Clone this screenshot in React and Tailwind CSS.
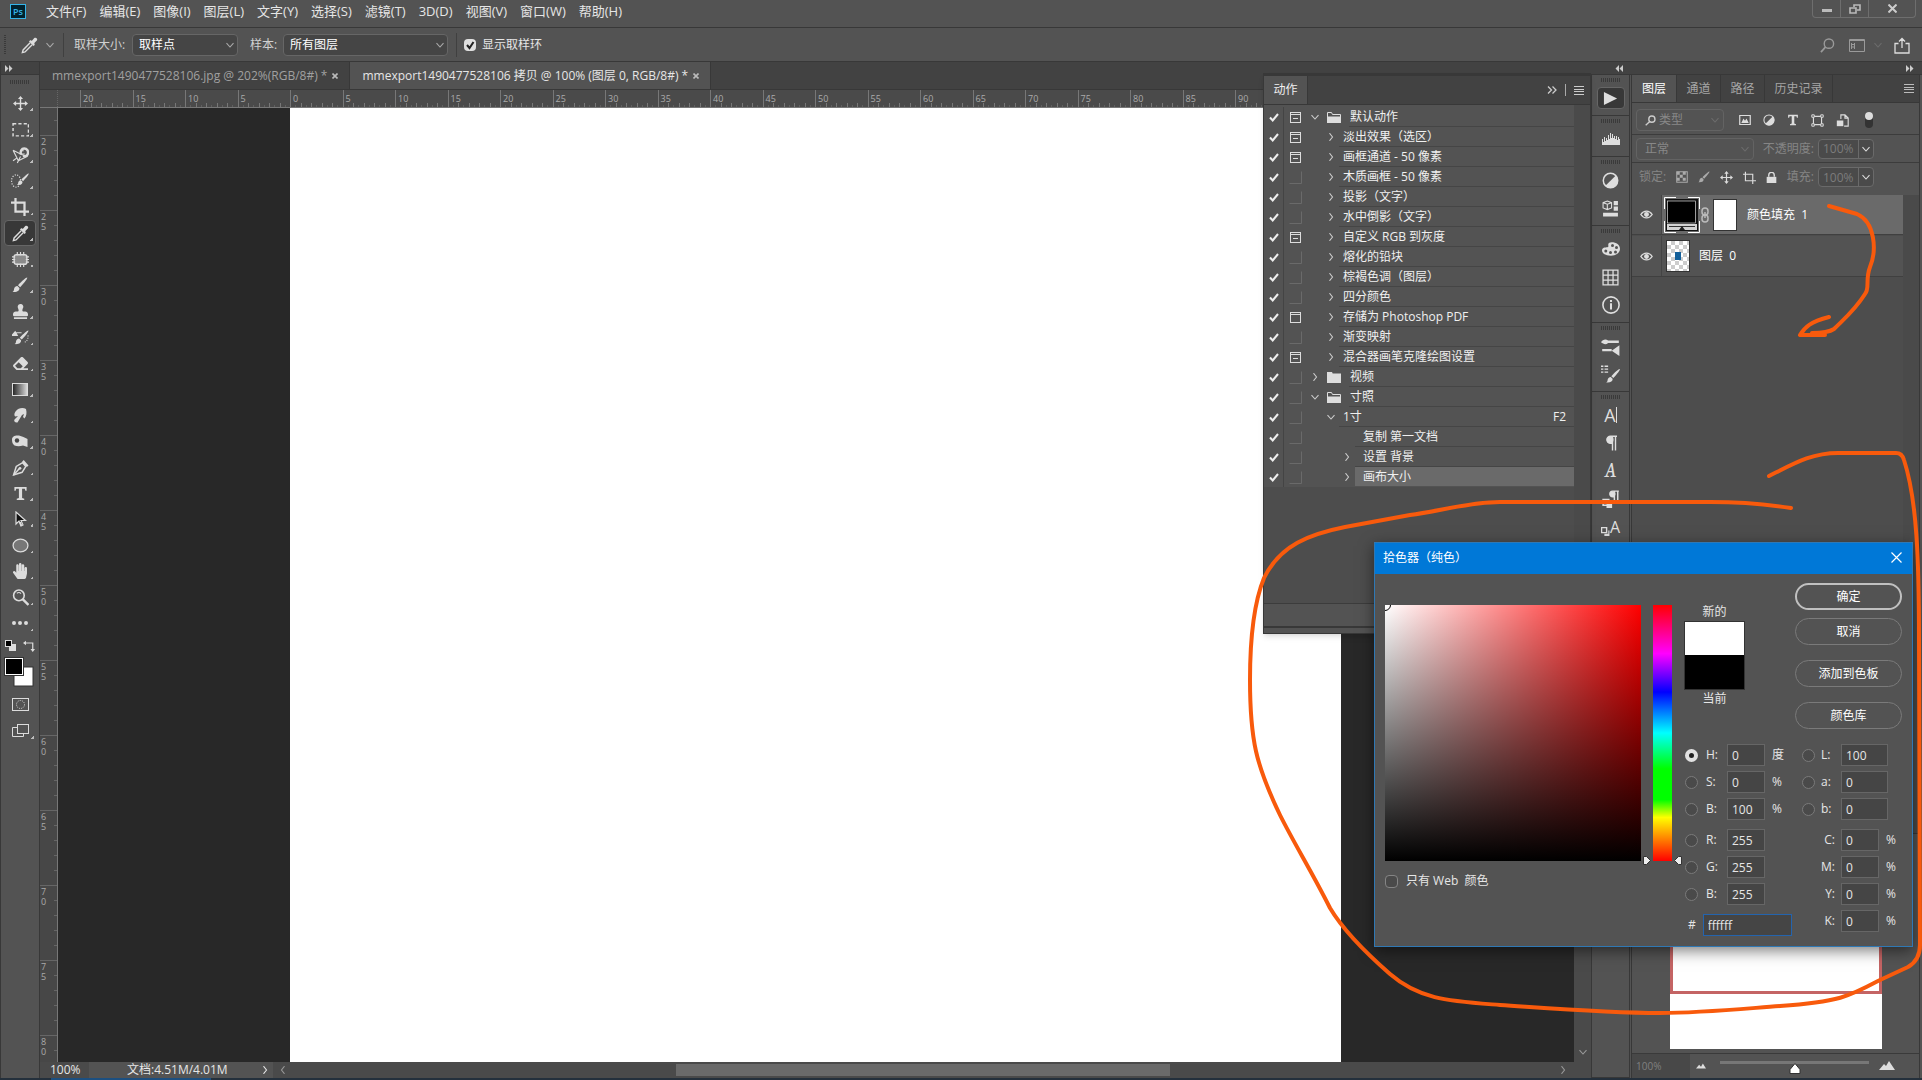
import React from "react";
import { FaStamp, FaEraser, FaHandPaper } from "react-icons/fa";

const Svg = ({ size = 16, children, className = "" }) => (
  <svg width={size} height={size} viewBox="0 0 16 16" fill="none" stroke="currentColor" strokeWidth="1.4" className={"shrink-0 " + className} aria-hidden="true">
    {children}
  </svg>
);

const Solid = ({ d, size = 16 }) => (
  <Svg size={size}><path d={d} fill="currentColor" stroke="none" /></Svg>
);

const BRUSH = "M15.2.6c.6.5-2 4.600-7 9.600L6 8.200C10.500 3.600 14.600 0 15.200.6zM5.400 9l2 2c.3 2.400-1.700 4.400-6.900 4 1.600-1 1.300-1.900 1.600-3.300C2.600 9.900 4 8.900 5.400 9z";

const Eyedropper = ({ size = 17 }) => (
  <Svg size={size}>
    <path d="M9.500 3.500l1-.3L12.500 1c1.500-1.300 3.600.8 2.400 2.300L12.800 5.400l-.3 1.200.6.6-1.300 1.300-4.300-4.300L8.800 2.900z" fill="currentColor" stroke="none" />
    <path d="M8.600 5.500L2 12.200 1.300 14.700 3.800 14 10.500 7.400" strokeWidth="1.300" />
  </Svg>
);
const Brush = ({ size = 16 }) => <Solid size={size} d={BRUSH} />;

const Move = ({ size = 16 }) => (
  <Svg size={size}>
    <path d="M8 2v12M2 8h12" strokeWidth="1.500" />
    <path d="M8 0l2.700 3.300H5.300zM8 16l2.700-3.300H5.300zM0 8l3.300-2.700v5.400zM16 8l-3.300-2.700v5.400z" fill="currentColor" stroke="none" />
  </Svg>
);
const TypeT = ({ size = 16 }) => <Solid size={size} d="M1.500 1h13v4h-1.300l-.6-2H9.700v9.800l2.300.7V15H4v-1.500l2.300-.7V3H3.400l-.6 2H1.500z" />;
const Contrast = ({ size = 17 }) => (
  <Svg size={size}><circle cx="8" cy="8" r="6.800" /><path d="M13 3.200A6.800 6.800 0 1 1 3.200 13z" fill="currentColor" stroke="none" /></Svg>
);
const Crop = ({ size = 18 }) => <Svg size={size}><path d="M0 4h12v12M4 0v12h12" strokeWidth="2" /></Svg>;
const Palette = () => (
  <svg width="18" height="14" viewBox="0 0 18 14" aria-hidden="true">
    <path fill="currentColor" fillRule="evenodd" d="M9.500.3C14.500.3 18 3 18 6.800c0 4-4 6.900-9 6.900-5.200 0-9-2.200-9-5.200C0 5.600 3 5.300 5.400 5.200 7.200 5 6 3.400 6.300 2.200 6.600 1 7.800.3 9.500.3zM10.500 2a1.500 1.500 0 1 0 0 3 1.500 1.500 0 0 0 0-3zM14.500 4a1.500 1.500 0 1 0 0 3 1.500 1.500 0 0 0 0-3zM13.500 8.500a1.500 1.500 0 1 0 0 3 1.500 1.500 0 0 0 0-3zM8.500 9a1.500 1.500 0 1 0 0 3 1.500 1.500 0 0 0 0-3zM3.800 7.400a1.500 1.500 0 1 0 0 3 1.500 1.500 0 0 0 0-3z" />
  </svg>
);
const Chevron = ({ className = "", dir = "down", size = 8 }) => (
  <svg width={size} height={size} viewBox="0 0 8 8" fill="none" stroke="currentColor" strokeWidth="1.100" className={"shrink-0 " + className} aria-hidden="true">
    <path d={dir === "down" ? "M.5 2.200L4 6l3.500-3.800" : dir === "right" ? "M2.500 .2L5.500 4 2.500 7.800" : "M5.500 .2L2.500 4l3 3.800"} />
  </svg>
);
const DoubleArrow = ({ left }) => (
  <svg width="8" height="7" viewBox="0 0 8 7" fill="currentColor" className={left ? "rotate-180" : ""} aria-hidden="true">
    <path d="M0 0l3.500 3.500L0 7zM4 0l3.500 3.500L4 7z" />
  </svg>
);
const Hamburger = () => (
  <svg width="10" height="9" viewBox="0 0 10 9" stroke="currentColor" aria-hidden="true"><path d="M0 .5h10M0 3.500h10M0 5.500h10M0 8.500h10" /></svg>
);

const TOOLS = [
  ["移动", <Move size={15} />],
  ["矩形选框", <Svg size={17}><rect x="1" y="2.500" width="14.500" height="11.500" strokeDasharray="3 2" /></Svg>],
  ["磁性套索", <Svg size={17}><path d="M1 3l5 10 8-4-5-2M1 3l8 4M5 10l-4 3M5 15l3-6" strokeWidth="1.100" /><path d="M8.500 7c-1-3 .5-5.500 3-5.500s4 2 3.500 4.500-3 3-4.500 2.300" strokeWidth="2.300" /><path d="M8 3.500h3M9 6.500h3" strokeWidth="1" /></Svg>],
  ["快速选择", <Svg size={18}><ellipse cx="4.500" cy="8" rx="4" ry="5.500" strokeDasharray="1 1.300" strokeWidth="1.100" /><g transform="translate(5 1) scale(.7)"><path d={BRUSH} fill="currentColor" stroke="none" /></g></Svg>],
  ["裁剪", <Crop />],
  ["吸管", <Eyedropper />],
  ["修复", <Svg size={17}><rect x="2" y="3.500" width="12" height="9" rx="2" fill="#8a8a8a" strokeWidth="1.300" /><path d="M5 1v3M8 1v3M11 1v3M5 12v3M8 12v3M11 12v3M0 5.500h3M0 8h3M0 10.500h3M13 5.500h3M13 8h3M13 10.500h3" strokeWidth="1.100" /></Svg>],
  ["画笔", <Brush />],
  ["仿制图章", <FaStamp size={15} />],
  ["历史记录画笔", <Svg size={17}><path d="M0 6l3-3.500L5 6zM4 3.500h5" fill="currentColor" strokeWidth="1" /><g transform="translate(2 1) scale(.88)"><path d={BRUSH} fill="currentColor" stroke="none" /></g><path d="M15 6c.5 3-1 6-4 7" strokeDasharray="1 1.200" strokeWidth="1" /></Svg>],
  ["橡皮擦", <FaEraser size={15} />],
  ["渐变", <svg width="16" height="13" aria-hidden="true"><defs><linearGradient id="tg"><stop stopColor="#222" /><stop offset="1" stopColor="#ddd" /></linearGradient></defs><rect x=".5" y=".5" width="15" height="12" fill="url(#tg)" stroke="currentColor" /></svg>],
  ["涂抹", <Solid d="M4 4C6 1 11 0 14 2c1 4 .5 7-1.500 9.500L11 10l1-3-2 1-4.500 7.500C3 16 1.500 14 2.500 12.500L6 9 3.500 9.500C2 9 2 6 4 4z" />],
  ["减淡", <Svg size={16}><path d="M0 6.500C0 3.500 3 2 7 2.500 10 3.500 13 4.500 15.500 6v8L11 12.500c-3 1-6 1-8.500 0C.5 11 0 9 0 6.500z" fill="currentColor" stroke="none" /><circle cx="5" cy="7.500" r="2.200" fill="#444" stroke="none" /></Svg>],
  ["钢笔", <Svg size={17}><path d="M1.500 15L4 7l6-3.500L13 7l-3.500 5.500z" /><path d="M1.500 15L7 9" /><circle cx="7.500" cy="8.800" r="1.300" fill="currentColor" stroke="none" /><path d="M9.500 2.500L11 1l4.500 5L14 7.500z" fill="currentColor" stroke="none" /></Svg>],
  ["文字", <TypeT size={15} />],
  ["路径选择", <Svg size={16}><path d="M4 1v12l3-3 2 5 2-1-2-4.500h4.500z" fill="#111" strokeWidth="1.200" /><path d="M8 11l1.500 4" strokeWidth="2" /></Svg>],
  ["椭圆", <Svg size={17}><ellipse cx="8" cy="8" rx="7" ry="6" fill="#777" strokeWidth="1.200" /></Svg>],
  ["抓手", <FaHandPaper size={16} />],
  ["缩放", <Svg size={17}><circle cx="6.500" cy="6" r="5" strokeWidth="1.500" /><path d="M10 9.500l5.500 5.500" strokeWidth="2.300" /><path d="M4.500 4c1.500-1 3-.8 4 .3" strokeWidth="1" /></Svg>],
  ["更多", <Solid d="M0 8a2 2 0 1 0 4 0 2 2 0 1 0-4 0M6 8a2 2 0 1 0 4 0 2 2 0 1 0-4 0M12 8a2 2 0 1 0 4 0 2 2 0 1 0-4 0" />],
];

const Grip = ({ className = "h-3" }) => (
  <div className={"flex items-center justify-center " + className}>
    <div className="h-1 w-5 bg-[repeating-linear-gradient(90deg,#3a3a3a_0_1px,transparent_1px_2px)]" />
  </div>
);

const Corner = () => (
  <span className="absolute bottom-1 right-0.5 size-[3px] bg-[linear-gradient(135deg,transparent_50%,#bbb_50%)]" />
);

function Toolbar() {
  return (
    <aside className="flex w-10 shrink-0 flex-col border-x border-[#383838]">
      <div className="flex h-3 items-center bg-[#424242] pl-1 text-[#ccc]"><DoubleArrow /></div>
      <div className="border-t border-[#383838] pt-px"><Grip /></div>
      <div className="mt-0.5 flex flex-col items-center text-[#dcdcdc]">
        {TOOLS.map(([name, icon], i) => (
          <button key={name} aria-label={name} className={"relative flex h-[26px] w-8 items-center justify-center rounded-sm border " + (i === 5 ? "border-[#666] bg-[#383838]" : "border-transparent")}>
            {icon}
            <Corner />
          </button>
        ))}
      </div>
      <div className="flex justify-between px-1 pt-1 text-[#dcdcdc]">
        <svg width="11" height="11" aria-hidden="true"><rect x="4" y="4" width="7" height="7" fill="#ddd" /><rect x=".5" y=".5" width="6" height="6" fill="#000" stroke="#ddd" /></svg>
        <Svg size={12}><path d="M3 4h10v10" strokeWidth="1.600" /><path d="M0 4l4-3v6zM13 16l-3-4h6z" fill="currentColor" stroke="none" /></Svg>
      </div>
      <svg width="30" height="30" className="ml-[3px] mt-[5px]" aria-hidden="true">
        <rect x="10" y="10" width="19" height="19" fill="#fff" stroke="#333" />
        <rect x=".5" y=".5" width="19" height="18" fill="#333" stroke="#333" />
        <rect x="1.500" y="1.500" width="17" height="16" fill="#000" stroke="#fff" />
      </svg>
      <div className="mt-1 flex flex-col items-center text-[#dcdcdc]">
        <button aria-label="快速蒙版" className="flex h-[26px] items-center"><svg width="17" height="13" fill="none" stroke="currentColor" aria-hidden="true"><rect x=".5" y=".5" width="16" height="12" /><circle cx="8.500" cy="6.500" r="4" strokeDasharray="1 1.200" /></svg></button>
        <button aria-label="屏幕模式" className="relative flex h-[26px] w-8 items-center justify-center"><svg width="17" height="13" fill="none" stroke="currentColor" aria-hidden="true"><path d="M5 3.500H.5v9h11V10" /><rect x="5.500" y=".5" width="11" height="9" /></svg><Corner /></button>
      </div>
    </aside>
  );
}

function HRuler() {
  const origin = 232, step = 52.5;
  const marks = [];
  for (let i = -4; i < 26; i++) marks.push(i);
  return (
    <svg className="block h-[17px] min-w-0 flex-1 overflow-hidden" stroke="#777" aria-hidden="true">
      {marks.map((m) => (
        <g key={m}>
          <path d={`M${Math.round(origin + m * step) + 0.5} 0V17`} />
          {[1, 2, 3, 4].map((k) => <path key={k} d={`M${Math.round(origin + m * step + k * 10.5) + 0.5} 13V17`} />)}
          {[1, 3, 5, 7, 9].map((k) => <path key={k} stroke="#5f5f5f" d={`M${Math.round(origin + m * step + k * 5.25) + 0.5} 15V17`} />)}
          {m < 19 && <text x={origin + m * step + 3} y="12" stroke="none" fill="#aaa" fontSize="9">{Math.abs(m * 5)}</text>}
        </g>
      ))}
    </svg>
  );
}

function VRuler() {
  const marks = [];
  for (let i = 0; i < 13; i++) marks.push(i);
  return (
    <svg className="block h-full w-[18px] shrink-0 overflow-hidden border-r border-[#777] bg-[#474747]" stroke="#666" aria-hidden="true">
      <path d="M14 12.500h3" />
      {marks.map((m) => (
        <g key={m}>
          <path d={`M0 ${27.5 + m * 75}H18`} />
          {[1, 2, 3, 4].map((k) => <path key={k} d={`M14 ${27.5 + m * 75 + k * 15}H18`} />)}
          <text x="1" y={37 + m * 75} stroke="none" fill="#aaa" fontSize="9">{Math.floor((20 + m * 5) / 10)}</text>
          <text x="1" y={47 + m * 75} stroke="none" fill="#aaa" fontSize="9">{(m * 5) % 10}</text>
        </g>
      ))}
    </svg>
  );
}

function DocTab({ label, active }) {
  return (
    <div className={"flex h-full items-center gap-[5px] border-r border-[#383838] pl-3 pr-[11px] " + (active ? "bg-[#535353] text-[#e6e6e6]" : "text-[#a0a0a0]")}>
      <button className="whitespace-nowrap">{label}</button>
      <button aria-label="关闭" className="text-[#bbb]"><svg width="6" height="6" viewBox="0 0 6 6" stroke="currentColor" strokeWidth="1.600" aria-hidden="true"><path d="M.5 .5l5 5M5.500 .5l-5 5" /></svg></button>
    </div>
  );
}

// [label, level, toggle, state, key]
const ACTIONS = [
  ["默认动作", 0, "minus", "open"],
  ["淡出效果（选区）", 1, "minus", "closed"],
  ["画框通道 - 50 像素", 1, "minus", "closed"],
  ["木质画框 - 50 像素", 1, "", "closed"],
  ["投影（文字）", 1, "", "closed"],
  ["水中倒影（文字）", 1, "", "closed"],
  ["自定义 RGB 到灰度", 1, "minus", "closed"],
  ["熔化的铅块", 1, "", "closed"],
  ["棕褐色调（图层）", 1, "", "closed"],
  ["四分颜色", 1, "", "closed"],
  ["存储为 Photoshop PDF", 1, "box", "closed"],
  ["渐变映射", 1, "", "closed"],
  ["混合器画笔克隆绘图设置", 1, "minus", "closed"],
  ["视频", 0, "", "closed"],
  ["寸照", 0, "", "open"],
  ["1寸", 1, "", "open", "F2"],
  ["复制 第一文档", 2, "", ""],
  ["设置 背景", 2, "", "closed"],
  ["画布大小", 2, "", "closed"],
];

function ActionRow({ row, selected }) {
  const [label, level, toggle, state, fkey] = row;
  return (
    <li className="flex h-5 items-center">
      <span className="flex h-full w-5 shrink-0 items-center justify-center border-r border-[#444]">
        <svg width="10" height="9" viewBox="0 0 10 9" fill="none" stroke="#eee" strokeWidth="2" aria-hidden="true"><path d="M1 4.500l2.700 3L9 1" /></svg>
      </span>
      <svg width="13" height="13" viewBox="0 0 13 13" fill="none" className="ml-[5px] shrink-0" aria-hidden="true">
        {toggle ? <g stroke="#ddd"><rect x="1.500" y="1.500" width="10" height="10" /><path d="M1 3.500h11" />{toggle === "minus" && <path d="M4 7.500h5" />}</g> : <path d="M.5 12.500h12V.5" stroke="#6a6a6a" />}
      </svg>
      <span className={"flex h-full min-w-0 flex-1 items-center " + (level === 0 ? "pl-[9px]" : level === 1 ? "pl-[25px]" : "pl-[41px]")}>
        <span className="flex w-2 shrink-0 justify-center text-[#ccc]">{state && <Chevron dir={state === "open" ? "down" : "right"} />}</span>
        {level === 0 && (
          <svg width="14" height="12" viewBox="0 0 14 12" className="ml-2 shrink-0" aria-hidden="true">
            {state === "open" ? <g><path d="M.5 6V1.500h4l1 2h8V6" fill="none" stroke="#ddd" /><path d="M0 5.500h14V12H0z" fill="#ddd" /></g> : <path d="M0 1h5l.7 1.500H14V12H0z" fill="#ddd" />}
          </svg>
        )}
        <span className={"flex h-full min-w-0 flex-1 items-center justify-between whitespace-pre border-b pr-2 " + (level === 0 ? "ml-2 pl-px" : level === 1 ? "ml-1 pl-1" : "ml-1 pl-2") + (selected ? " border-[#535353] bg-[#6a6a6a]" : " border-[#454545]")}>
          <span>{label}</span>
          {fkey && <span>{fkey}</span>}
        </span>
      </span>
    </li>
  );
}

function ActionsPanel() {
  return (
    <section className="absolute right-0 top-[11px] flex h-[561px] w-[328px] flex-col border border-[#383838] border-t-[3px] bg-[#4d4d4d] text-[#f0f0f0] shadow-md">
      <header className="flex h-7 shrink-0 bg-[#424242]">
        <button className="w-11 border-r border-[#383838] bg-[#535353]">动作</button>
        <span className="ml-auto flex items-center gap-2 pr-1.5 text-[#ccc]">
          <svg width="10" height="8" fill="none" stroke="currentColor" strokeWidth="1.300" aria-hidden="true"><path d="M1 .5L4.500 4 1 7.500M5.500 .5L9 4 5.500 7.500" /></svg>
          <span className="h-3 w-px bg-[#aaa]" />
          <Hamburger />
        </span>
      </header>
      <div className="flex min-h-0 flex-1 border-t border-[#383838]">
        <div className="min-w-0 flex-1">
          <ul className="bg-[#535353] pt-0.5">
            {ACTIONS.map((r, i) => <ActionRow key={r[0]} row={r} selected={i === 18} />)}
          </ul>
        </div>
        <div className="w-4 bg-[#4a4a4a]" />
      </div>
      <footer className="h-[30px] shrink-0 border-t border-[#3c3c3c] bg-[#535353]">
        <div className="mt-[22px] h-0.5 bg-[#383838]" />
      </footer>
    </section>
  );
}

const DOCK = [
  [["播放", <Solid size={15} d="M1 1v14l14-7z" />]],
  [["直方图", <svg width="18" height="12" fill="currentColor" aria-hidden="true"><path d="M0 12V6h1v3h1V4h1v4h1V5h1v2h1V2h1v4h1V0h1v5h1V1h1v4h1V3h1v3h1V3h1v4h1V4h1v2h1v6z" /></svg>]],
  [["调整", <Contrast />], ["3D", <Svg size={17}><path d="M5 1l4 1.500v5L5 9 1 7.500v-5zM1 2.500L5 4l4-1.500M5 4v5" strokeWidth="1" /><path d="M11 1h4v4h-4zM11 6h4v4h-4zM1 12h14v3.500H1z" fill="currentColor" stroke="none" /></Svg>]],
  [["颜色", <Palette />], ["色板", <Svg size={17}><path d="M1 1h14v14H1zM5.700 1v14M10.400 1v14M1 5.700h14M1 10.400h14" strokeWidth="1.200" /></Svg>], ["信息", <Svg size={18}><circle cx="8" cy="8" r="7.200" /><path d="M8 6.500V12M8 3.500v1.800" strokeWidth="1.800" /></Svg>]],
  [["画笔设置", <Svg size={19}><path d="M0 4.500c1.500-2.500 4-3 6-1.500h9v2H6C4 7 2 6 0 4.500zM1 10h8v2H1zM15.500 7v9L9 11.500z" fill="currentColor" stroke="none" /></Svg>], ["画笔", <Svg size={19}><path d="M0 1h2M3 1h3M0 3.500h2M3 3.500h3M0 6h2M3 6h3" strokeWidth="1.200" /><g transform="translate(4 3) scale(.78)"><path d={BRUSH} fill="currentColor" stroke="none" /></g></Svg>]],
  [
    ["字符", <span className="flex items-center text-lg leading-none">A<span className="h-4 w-px bg-current" /></span>],
    ["段落", <Svg size={16}><path d="M14 1.200H7.500a3.500 3.500 0 0 0 0 7H9V1.500M9.500 1v14.500M12.500 1v14.500" /><circle cx="7" cy="4.700" r="3.500" fill="currentColor" stroke="none" /></Svg>],
    ["字形", <span className="font-serif text-xl italic leading-none">A</span>],
    ["段落样式", <Svg size={18}><path d="M15 1H9.500a2.500 2.500 0 0 0 0 5H11M11 1v10M14 1v10" strokeWidth="1.300" /><circle cx="9.500" cy="3.500" r="2.500" fill="currentColor" stroke="none" /><path d="M1 8.500h5v5H1z" /><path d="M4 11h5v5H4z" fill="currentColor" stroke="none" /></Svg>],
    ["字符样式", <span className="flex items-center leading-none"><Svg size={9} className="mt-2"><path d="M1 1h9v9H1z" strokeWidth="2.500" /><path d="M6 12h7V6h2v10H6z" fill="currentColor" stroke="none" /></Svg><span className="text-base leading-none">A</span></span>],
  ],
];

function Dock() {
  return (
    <aside className="flex w-[39px] shrink-0 flex-col border-x border-[#383838]">
      {DOCK.map((g, i) => (
        <div key={i} className={"border-b border-[#383838] pb-[3px] text-[#dedede]" + (i === 5 ? " flex-1" : "")}>
          <Grip className="h-[9px]" />
          {g.map(([name, icon]) => (
            <div key={name} className="flex h-7 items-center justify-center">
              <button aria-label={name} className={"flex h-[22px] w-7 items-center justify-center rounded-sm " + (name === "播放" ? "border border-[#666] bg-[#383838]" : "")}>{icon}</button>
            </div>
          ))}
        </div>
      ))}
    </aside>
  );
}

const Eye = () => (
  <Svg size={13}><path d="M1 8c3.500-5.500 10.500-5.500 14 0-3.500 5.500-10.500 5.500-14 0z" strokeWidth="1.600" /><circle cx="8" cy="8" r="3" fill="currentColor" stroke="none" /></Svg>
);

function PercentBox({ id, label }) {
  return (
    <>
      <label htmlFor={id} className="ml-auto text-[#858585]">{label}</label>
      <span className="flex h-5 w-14 items-center rounded-sm border border-[#6a6a6a] bg-[#4a4a4a]">
        <input id={id} defaultValue="100%" className="h-full w-10 min-w-0 border-r border-[#6a6a6a] bg-transparent pl-1 text-[#7c7c7c] outline-none" />
        <span className="flex flex-1 justify-center text-[#ddd]"><Chevron /></span>
      </span>
    </>
  );
}

function LayersPanel() {
  return (
    <section className="flex w-[288px] shrink-0 flex-col border-r border-[#383838]">
      <nav className="flex h-7 shrink-0 items-stretch border-b border-[#383838] bg-[#424242] text-[#a6a6a6]">
        <button className="w-11 bg-[#535353] text-white">图层</button>
        <button className="w-[45px] border-x border-[#383838]">通道</button>
        <button className="w-11 border-r border-[#383838]">路径</button>
        <button className="w-[68px] border-r border-[#383838]">历史记录</button>
        <span className="ml-auto flex items-center pr-[5px] text-[#bbb]"><Hamburger /></span>
      </nav>
      <div className="flex h-8 shrink-0 items-center border-b border-[#3c3c3c] pl-1 pt-[3px]">
        <div className="relative flex w-[88px] items-center rounded-sm border border-[#636363]">
          <span className="absolute left-2 text-[#ccc]"><Svg size={11}><circle cx="10" cy="6" r="4.500" strokeWidth="2" /><path d="M7 9.500L1 15" strokeWidth="2" /></Svg></span>
          <select aria-label="类型" className="h-5 w-full appearance-none bg-transparent pl-[22px] text-[#888] outline-none"><option>类型</option></select>
          <Chevron className="absolute right-1 text-[#6c6c6c]" />
        </div>
        <div className="ml-[15px] flex items-center gap-3 text-[#ddd]">
          <Svg size={12}><path d="M1 2h14v12H1z" strokeWidth="1.600" /><path d="M3 12l3-6 2 3 2-3 3 6z" fill="currentColor" stroke="none" /></Svg>
          <Contrast size={12} />
          <TypeT size={12} />
          <Svg size={13}><path d="M3 3h10v10H3z" strokeWidth="1.400" /><path d="M1 1h3v3H1zM12 1h3v3h-3zM1 12h3v3H1zM12 12h3v3h-3z" fill="#535353" strokeWidth="1.200" /></Svg>
          <Svg size={13}><path d="M6 6V1h5l4 4v10h-5M11 1v4h4" /><path d="M1 8h8v7H1z" fill="currentColor" stroke="none" /></Svg>
          <span className="ml-1 h-4 w-2 rounded-full bg-[#333]"><span className="block size-2 rounded-full bg-[#ddd]" /></span>
        </div>
      </div>
      <div className="flex h-7 shrink-0 items-center gap-1 border-b border-[#3c3c3c] pl-1 pr-[45px]">
        <div className="relative flex w-[118px] items-center rounded-sm border border-[#636363]">
          <select aria-label="混合模式" className="h-5 w-full appearance-none bg-transparent pl-2 text-[#888] outline-none"><option>正常</option></select>
          <Chevron className="absolute right-1 text-[#6c6c6c]" />
        </div>
        <PercentBox id="opacity" label="不透明度:" />
      </div>
      <div className="mb-1 flex h-7 shrink-0 items-center gap-1 pl-[7px] pr-[45px] text-[#ddd]">
        <span className="text-[#858585]">锁定:</span>
        <span className="ml-[6px] flex items-center gap-[10px]">
          <Svg size={12}><path d="M1 1h14v14H1z" stroke="#aaa" /><path d="M1 1h4v4H1zM9 1h4v4H9zM5 5h4v4H5zM1 9h4v4H1zM9 9h4v4H9z" fill="#aaa" stroke="none" /></Svg>
          <span className="text-[#aaa]"><Brush size={12} /></span>
          <Move size={13} />
          <Svg size={13}><path d="M0 4h12v12M3 1v11h13" /></Svg>
          <Svg size={11}><path d="M1 7h14v9H1z" fill="currentColor" stroke="none" /><path d="M4 7V4.500a4 4 0 0 1 8 0V7" strokeWidth="2" /></Svg>
        </span>
        <PercentBox id="fill" label="填充:" />
      </div>
      <div className="flex min-h-0 flex-1 bg-[#4d4d4d]">
        <ul className="flex-1 text-white">
          <li className="flex h-10 border-b border-[#404040] bg-[#535353]">
            <button aria-label="可见" className="flex w-[30px] items-center justify-center border-r border-[#444] text-[#ddd]"><Eye /></button>
            <button className="flex flex-1 items-center bg-[#6a6a6a] pl-0.5">
              <svg width="36" height="36" viewBox="0 0 36 36" aria-hidden="true">
                <path d="M.5 12V.5H12M24 .5h11.500V12M35.500 24v11.500H24M12 35.500H.5V24" fill="none" stroke="#fff" />
                <rect x="2" y="2" width="32" height="32" fill="#111" /><rect x="3.500" y="4" width="28" height="22" fill="#000" stroke="#fff" strokeWidth=".6" />
                <rect x="3" y="27" width="30" height="6" fill="#d4d4d4" /><path d="M5 29.500h26" stroke="#333" /><path d="M18 29l3 4h-6z" fill="#222" />
              </svg>
              <svg width="8" height="16" viewBox="0 0 8 16" fill="none" stroke="#bbb" strokeWidth="1.500" className="ml-px" aria-hidden="true"><rect x="1" y="1" width="6" height="7" rx="3" /><rect x="1" y="8" width="6" height="7" rx="3" /><path d="M4 5v6" /></svg>
              <span className="ml-1 h-8 w-6 border border-[#333] bg-white" />
              <span className="ml-[10px] whitespace-pre">颜色填充  1</span>
            </button>
          </li>
          <li className="mt-px flex h-[41px] border-b border-[#404040] bg-[#535353]">
            <button aria-label="可见" className="flex w-[30px] items-center justify-center border-r border-[#444] text-[#ddd]"><Eye /></button>
            <button className="flex items-center pl-1">
              <span className="flex h-8 w-6 items-center justify-center border border-[#333] bg-[repeating-conic-gradient(#ccc_0_25%,#fff_0_50%)] bg-[length:8px_8px]"><span className="h-2 w-1.5 bg-[#14609a]" /></span>
              <span className="ml-[9px] whitespace-pre">图层  0</span>
            </button>
          </li>
        </ul>
        <div className="w-4 bg-[#4a4a4a]" />
      </div>
      <div className="flex h-[220px] shrink-0 justify-center border-t border-[#383838] pb-1">
        <div className="w-[212px] bg-white"><div className="h-40 border-[3px] border-[#c46464]" /></div>
      </div>
      <div className="flex h-[25px] shrink-0 items-center border-t border-[#3a3a3a]">
        <input aria-label="缩放" defaultValue="100%" className="h-full w-[58px] bg-[#484848] pl-1 text-[10px] text-[#808080] outline-none" />
        <span className="ml-[6px] text-[#ddd]"><Solid size={10} d="M0 12l5-6 3 3 3-5 5 8z" /></span>
        <span className="relative ml-[14px] flex h-full w-[149px] items-center">
          <input type="range" aria-label="缩放滑块" defaultValue="50" className="absolute inset-0 opacity-0" />
          <span className="-mt-2 h-[3px] w-full bg-[#777]" />
          <svg width="12" height="11" viewBox="0 0 12 11" className="absolute bottom-1 left-[69px]" aria-hidden="true"><path d="M6 .5l5 6v4H1v-4z" fill="#fff" stroke="#333" /></svg>
        </span>
        <span className="ml-[10px] text-[#ddd]"><Solid size={16} d="M0 12l5-6 2 2 3-5 6 9z" /></span>
      </div>
    </section>
  );
}

function Field({ name, label, value, unit, radio, checked, side }) {
  const id = "f-" + name;
  const left = side === "left";
  return (
    <div className="flex h-[22px] items-center">
      {radio ? (
        <input type="radio" name="channel" aria-label={label} defaultChecked={checked} className="ml-px size-[13px] shrink-0 appearance-none rounded-full border border-[#7a7a7a] bg-[#4a4a4a] checked:border-4 checked:border-[#e2e2e2] checked:bg-[#222]" />
      ) : <span className="w-[14px] shrink-0" />}
      <label htmlFor={id} className={left ? "ml-2 w-[21px]" : radio ? "ml-[6px] w-5" : "mr-[6px] w-5 text-right"}>{label}</label>
      <input id={id} defaultValue={value} className={"h-full min-w-0 border border-[#666] bg-[#454545] pl-1 outline-none " + (!left && radio ? "w-[47px]" : "w-[38px]")} />
      {unit && <span className="ml-[7px]">{unit}</span>}
    </div>
  );
}

function ColorPicker() {
  return (
    <section role="dialog" aria-label="拾色器" className="absolute right-[9px] top-[542px] flex w-[539px] flex-col border border-[#2f78b4] bg-[#535353] text-[#e6e6e6] shadow-[0_4px_14px_rgba(0,0,0,0.5)]">
      <header className="flex h-[31px] items-center justify-between bg-[#0078d7] pb-0.5 pl-2 pr-[10px] text-white">
        <h1>拾色器（纯色）</h1>
        <button aria-label="关闭"><svg width="11" height="11" stroke="currentColor" strokeWidth="1.200" aria-hidden="true"><path d="M.5 .5l10 10M10.500 .5l-10 10" /></svg></button>
      </header>
      <div className="flex gap-3 px-[10px] pb-[10px] pt-[9px]">
        <div className="pt-[22px]">
          <div className="size-64 bg-[linear-gradient(to_top,#000,transparent),linear-gradient(to_right,#fff,#f00)]">
            <svg width="7" height="7" fill="none" stroke="#000" aria-hidden="true"><circle cx="0" cy="0" r="5.500" /></svg>
          </div>
          <label className="mt-3 flex items-center gap-2">
            <input type="checkbox" className="size-[13px] appearance-none rounded-sm border border-[#858585] bg-[#4a4a4a]" />
            <span className="whitespace-pre">只有 Web  颜色</span>
          </label>
        </div>
        <div className="relative pt-[22px]">
          <div className="h-64 w-[19px] bg-[linear-gradient(to_bottom,#f00_0%,#f0f_19%,#00f_34%,#0ff_50%,#0f0_64%,#0f0_76%,#ff0_83%,#f00_100%)]" />
          <svg width="39" height="9" viewBox="0 0 39 9" className="absolute -left-[10px] top-[273px]" fill="#eee" stroke="#333" aria-hidden="true"><path d="M.5 .5h3l4 4-4 4h-3zM38.500 .5h-3l-4 4 4 4h3z" /></svg>
        </div>
        <div className="flex flex-1 flex-col">
          <div className="flex justify-between">
            <div className="flex w-[61px] flex-col items-center pt-5">
              <span className="leading-[18px]">新的</span>
              <span className="h-[34px] w-full border border-b-0 border-[#333] bg-white" />
              <span className="h-[35px] w-full border border-t-0 border-[#333] bg-black" />
              <span className="leading-[18px]">当前</span>
            </div>
            <div className="flex w-[107px] flex-col text-white">
              <button className="h-[27px] rounded-full border-2 border-[#c0c0c0]">确定</button>
              <button className="mt-2 h-[27px] rounded-full border border-[#7a7a7a]">取消</button>
              <button className="mt-[15px] h-[27px] rounded-full border border-[#7a7a7a]">添加到色板</button>
              <button className="mt-[15px] h-[27px] rounded-full border border-[#7a7a7a]">颜色库</button>
            </div>
          </div>
          <div className="mt-[15px] flex">
            <div className="flex w-[117px] flex-col gap-[5px]">
              <Field side="left" name="h" label="H:" value="0" unit="度" radio checked />
              <Field side="left" name="s" label="S:" value="0" unit="%" radio />
              <Field side="left" name="bb" label="B:" value="100" unit="%" radio />
              <div className="mt-1"><Field side="left" name="r" label="R:" value="255" radio /></div>
              <Field side="left" name="g" label="G:" value="255" radio />
              <Field side="left" name="b2" label="B:" value="255" radio />
              <div className="mt-1 flex h-[22px] items-center gap-[7px] pl-[4px]">
                <label htmlFor="hex">#</label>
                <input id="hex" defaultValue="ffffff" className="h-full w-[89px] shrink-0 border border-[#2464ae] bg-[#454545] pl-1 outline-none" />
              </div>
            </div>
            <div className="flex w-[101px] flex-col gap-[5px]">
              <Field name="l" label="L:" value="100" radio />
              <Field name="a" label="a:" value="0" radio />
              <Field name="b3" label="b:" value="0" radio />
              <div className="mt-1"><Field name="c" label="C:" value="0" unit="%" /></div>
              <Field name="m" label="M:" value="0" unit="%" />
              <Field name="y" label="Y:" value="0" unit="%" />
              <Field name="k" label="K:" value="0" unit="%" />
            </div>
          </div>
        </div>
      </div>
    </section>
  );
}

const MENUS = ["文件(F)", "编辑(E)", "图像(I)", "图层(L)", "文字(Y)", "选择(S)", "滤镜(T)", "3D(D)", "视图(V)", "窗口(W)", "帮助(H)"];

export default function App() {
  return (
    <div className="relative flex h-screen w-full flex-col overflow-hidden bg-[#535353] font-['Open_Sans','Noto_Sans_CJK_SC',sans-serif] text-xs leading-4 text-[#e6e6e6]">
      <header className="flex h-7 shrink-0 items-start border-b border-[#383838] pl-[10px] pr-1.5">
        <span className="mt-1 flex h-[15px] w-4 items-center justify-center border border-[#35b4e8] bg-[#00222e] text-[9px] font-semibold leading-none text-[#35b4e8]">Ps</span>
        <nav className="ml-5 flex h-[22px] items-center gap-[13px] text-[13px]">
          {MENUS.map((m) => <button key={m}>{m}</button>)}
        </nav>
        <div className="ml-auto flex h-[18px] rounded-b border border-t-0 border-[#6e6e6e] text-[#ccc]">
          <button aria-label="最小化" className="flex w-7 items-center justify-center border-r border-[#6e6e6e] pt-1"><span className="h-[3px] w-[10px] bg-[#bbb]" /></button>
          <button aria-label="还原" className="flex w-7 items-center justify-center border-r border-[#6e6e6e]"><svg width="12" height="10" fill="none" stroke="#bbb" strokeWidth="1.600" aria-hidden="true"><path d="M5 3V1h6v5H8M1 4h6v5H1z" /></svg></button>
          <button aria-label="关闭" className="flex w-[46px] items-center justify-center"><svg width="9" height="9" stroke="currentColor" strokeWidth="2" aria-hidden="true"><path d="M.5 .5l8 8M8.500 .5l-8 8" /></svg></button>
        </div>
      </header>

      <div className="flex h-[33px] shrink-0 items-center pl-1 pr-3 pt-px">
        <span className="h-5 w-0.5 bg-[repeating-linear-gradient(#3a3a3a_0_1px,transparent_1px_2px)]" />
        <button aria-label="吸管工具" className="ml-[15px] flex items-center gap-2 text-[#ddd]"><Eyedropper size={17} /><Chevron className="text-[#aaa]" /></button>
        <span className="ml-[9px] h-6 w-px bg-[#404040]" />
        <label htmlFor="size" className="ml-[10px] w-[58px] whitespace-nowrap text-[#d0d0d0]">取样大小:</label>
        <span className="relative flex w-[106px] items-center">
          <select id="size" className="h-[22px] w-full appearance-none rounded-sm border border-[#666] bg-[#454545] pl-[6px] text-white outline-none"><option>取样点</option></select>
          <Chevron className="absolute right-1 text-[#aaa]" />
        </span>
        <label htmlFor="sample" className="ml-3 w-[33px] whitespace-nowrap text-[#d0d0d0]">样本:</label>
        <span className="relative flex w-[165px] items-center">
          <select id="sample" className="h-[22px] w-full appearance-none rounded-sm border border-[#666] bg-[#454545] pl-[6px] text-white outline-none"><option>所有图层</option></select>
          <Chevron className="absolute right-1 text-[#aaa]" />
        </span>
        <span className="ml-2 h-6 w-px bg-[#404040]" />
        <label className="ml-[7px] flex items-center gap-[6px]">
          <span className="relative flex size-3">
            <input type="checkbox" defaultChecked className="size-3 appearance-none rounded-sm bg-[#e0e0e0]" />
            <svg width="12" height="12" className="pointer-events-none absolute inset-0" fill="none" stroke="#222" strokeWidth="2" aria-hidden="true"><path d="M3 6l2.500 3L9.500 3" /></svg>
          </span>
          显示取样环
        </label>
        <div className="ml-auto flex items-center text-[#9a9a9a]">
          <Svg size={15}><circle cx="9.500" cy="6" r="5" strokeWidth="1.500" /><path d="M6 9.500L1 15" strokeWidth="1.800" /></Svg>
          <svg width="16" height="13" fill="none" stroke="currentColor" className="ml-[14px]" aria-hidden="true"><path d="M.5 .5h15v12H.5zM.5 1.500h15" /><path d="M2.500 4v6M5.500 4v6M2.500 5.500h3M2.500 8h3" /></svg>
          <Chevron className="ml-[9px] text-[#6c6c6c]" />
          <svg width="16" height="17" fill="none" stroke="#ddd" strokeWidth="1.300" className="ml-3" aria-hidden="true"><path d="M4.500 6.500H1v9.500h14V6.500h-3.500M8 11V1.500M5 4.500l3-3 3 3" /></svg>
        </div>
      </div>

      <div className="flex min-h-0 flex-1 border-t border-[#383838]">
        <Toolbar />
        <main className="relative flex min-w-0 flex-1 flex-col bg-[#424242]">
          <div className="flex h-7 shrink-0 border-b border-[#383838]">
            <DocTab label="mmexport1490477528106.jpg @ 202%(RGB/8#) *" />
            <DocTab label="mmexport1490477528106 拷贝 @ 100% (图层 0, RGB/8#) *" active />
          </div>
          <div className="flex h-[18px] shrink-0 border-b border-[#777] bg-[#4a4a4a]">
            <span className="h-full w-[18px] border-r border-dotted border-[#666]" />
            <HRuler />
          </div>
          <div className="flex min-h-0 flex-1">
            <VRuler />
            <div className="min-w-0 flex-1 overflow-hidden bg-[#282828] pl-[232px]"><div className="h-full w-[1051px] bg-white" /></div>
            <div className="flex w-[17px] shrink-0 items-end justify-center bg-[#4a4a4a] pb-1.5 text-[#999]"><Chevron /></div>
          </div>
          <footer className="flex h-4 shrink-0 items-center bg-[#4a4a4a]">
            <span className="w-[49px] pl-[10px]">100%</span>
            <span className="flex h-full w-[184px] items-center justify-between bg-[#535353] pl-[38px] pr-1"><span>文档:4.51M/4.01M</span><Chevron dir="right" /></span>
            <span className="flex w-5 justify-center text-[#999]"><Chevron dir="left" /></span>
            <span className="ml-[383px] h-3 w-[494px] bg-[#6a6a6a]" />
            <Chevron dir="right" className="ml-auto mr-6 text-[#999]" />
          </footer>
          <ActionsPanel />
        </main>
        <div className="flex shrink-0 flex-col">
          <div className="flex h-3 shrink-0 items-center justify-between bg-[#424242] pl-6 pr-2 text-[#ccc]"><DoubleArrow left /><DoubleArrow /></div>
          <div className="flex min-h-0 flex-1 border-t border-[#383838]">
            <Dock />
            <span className="w-0.5 border-r border-[#383838]" />
            <LayersPanel />
            <span className="w-0.5" />
          </div>
        </div>
      </div>
      <div className="h-0.5 shrink-0 bg-[#24303c]"><div className="ml-[51px] h-full w-40 bg-[#1c4f80]" /></div>

      <ColorPicker />

      <svg viewBox="0 0 1922 1080" preserveAspectRatio="none" className="pointer-events-none absolute inset-0 size-full" fill="none" stroke="#f85a0c" strokeWidth="4" strokeLinecap="round" strokeLinejoin="round" aria-hidden="true">
        <path d="M1791 508C1765 504 1740 502 1710 502H1500C1470 502 1440 511 1410 515L1345 527C1310 534 1280 545 1264 578C1253 605 1250 640 1250 680C1250 740 1256 765 1280 815C1295 845 1312 872 1330 908C1343 930 1366 953 1390 974C1420 1000 1450 1001 1500 1005C1560 1009 1610 1013 1660 1013C1700 1013 1740 1009 1780 1006C1840 1002 1850 996 1880 980L1908 967Q1920 960 1920 945L1919 640C1919 560 1917 500 1904 460Q1902 453 1896 453H1838C1812 453 1795 463 1769 476" />
        <path d="M1829 206L1857 214C1875 222 1877 250 1870 267C1865 280 1870 288 1865 294C1855 310 1845 318 1834 329Q1828 333 1812 333M1829 317C1810 322 1805 327 1800 335H1825" />
      </svg>
    </div>
  );
}
